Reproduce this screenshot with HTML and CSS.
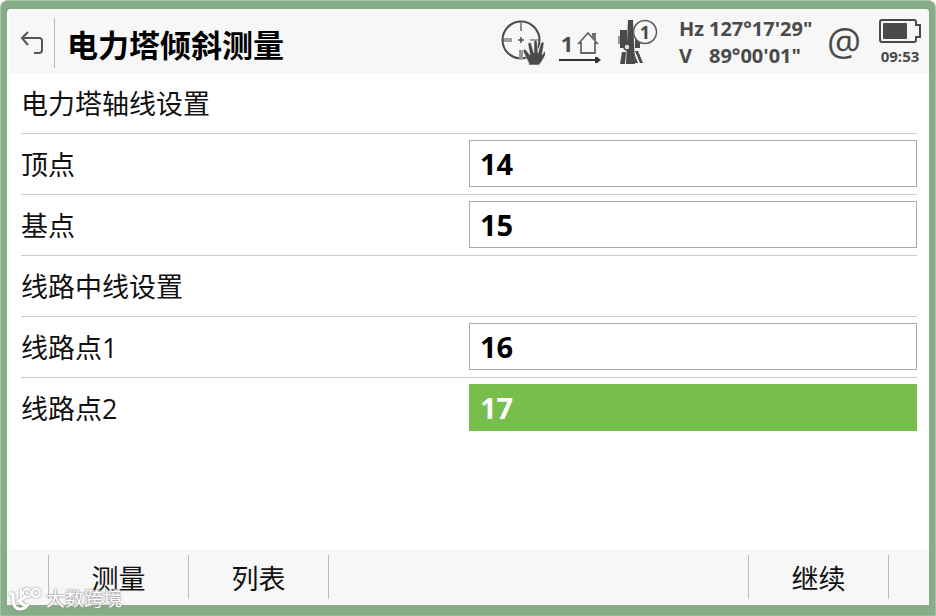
FILE: index.html
```html
<!DOCTYPE html>
<html lang="zh-CN">
<head>
    <meta charset="UTF-8">
    <meta name="viewport" content="width=device-width, initial-scale=1.0">
    <title>电力塔倾斜测量</title>
    <link rel="stylesheet" href="styles.css">
</head>
<body>
    <div class="device">
        <div class="screen">
            <!-- Status bar -->
            <header class="header">
                <button class="back" type="button" aria-label="返回">
                    <svg width="24" height="28" viewBox="0 0 24 28" fill="none" stroke="#555" stroke-width="2">
                        <path d="M8 3L2 9l6 7M2 9h17q3 0 3 3v9q0 3-3 3h-5"/>
                    </svg>
                </button>
                <h1>电力塔倾斜测量</h1>
                <div class="status">
                    <svg class="icon-target" width="44" height="48" viewBox="0 0 44 48" fill="none" stroke="#4a4a4a">
                        <circle cx="20" cy="21" r="18.5" stroke-width="2"/>
                        <path d="M20 4v8M2 20h9M2 22h9M29 21h9" stroke-width="1.2"/>
                        <path d="M18 31h4v9h-4z" fill="#999" stroke="none"/>
                        <path d="M20 18v6M17 21h6" stroke-width="1.5"/>
                        <path d="M28 46c0-4-3-6-4-10l-2-4q1-3 3-1l4 5-2-11q1-3 3-1l3 10v-12q2-2 3 0l1 12 3-10q2-2 3 0l-2 12 3-4q3-2 2 1l-5 9-3 4z" fill="#4a4a4a" stroke="#f7f7f7" stroke-width="0.5"/>
                    </svg>
                    <div class="home">
                        <div class="home-top">
                            <span>1</span>
                            <svg width="22" height="24" viewBox="0 0 22 24" fill="none" stroke="#666" stroke-width="1.8">
                                <path d="M4 22V12H2L11 2l9 10h-2v10zM16 7V3h2v6"/>
                            </svg>
                        </div>
                        <svg width="42" height="8" viewBox="0 0 42 8" fill="#333">
                            <path d="M0 3h36V1h2l4 3-4 3h-2V5H0z"/>
                        </svg>
                    </div>
                    <svg class="icon-station" width="44" height="48" viewBox="0 0 44 48">
                        <path d="M3 11h7v18H3zM18 17h5v12h-5zM5 33h4L8 45H3zM18 32h3l5 12h-3zM17 34l4 10h-3z" fill="#4a4a4a"/>
                        <path d="M1 17h2v8H1z" fill="#999"/>
                        <path d="M11 1h5l2 44h-9z" fill="#4a4a4a"/>
                        <circle cx="10" cy="28" r="3" fill="#ddd" stroke="#4a4a4a" stroke-width="1.5"/>
                        <circle cx="28" cy="13" r="11.5" fill="#f7f7f7" stroke="#5a5a5a" stroke-width="1.5"/>
                        <text x="28" y="20" text-anchor="middle" class="station-number">1</text>
                    </svg>
                    <div class="angles">
                        <span>Hz</span><span>127°17'29"</span>
                        <span>V</span><span>89°00'01"</span>
                    </div>
                    <span class="at">@</span>
                    <div class="battery">
                        <svg width="42" height="24" viewBox="0 0 42 24" fill="none" stroke="#4a4a4a" stroke-width="2">
                            <path d="M3 1h32q2 0 2 2v3h4v12h-4v3q0 2-2 2H3q-2 0-2-2V3q0-2 2-2z"/>
                            <rect x="4" y="4" width="24" height="16" rx="1" fill="#4a4a4a" stroke="none"/>
                        </svg>
                        <span>09:53</span>
                    </div>
                </div>
            </header>

            <!-- Settings form -->
            <main class="form">
                <h2 class="row">电力塔轴线设置</h2>
                <div class="row">
                    <label for="top-point">顶点</label>
                    <input id="top-point" type="text" value="14">
                </div>
                <div class="row">
                    <label for="base-point">基点</label>
                    <input id="base-point" type="text" value="15">
                </div>
                <h2 class="row">线路中线设置</h2>
                <div class="row">
                    <label for="line-point-1">线路点1</label>
                    <input id="line-point-1" type="text" value="16">
                </div>
                <div class="row">
                    <label for="line-point-2">线路点2</label>
                    <input id="line-point-2" class="active" type="text" value="17">
                </div>
            </main>

            <!-- Soft keys -->
            <footer class="softkeys">
                <span class="key"></span>
                <button class="key" type="button">测量</button>
                <button class="key" type="button">列表</button>
                <span class="key key-blank"></span>
                <button class="key" type="button">继续</button>
                <span class="key"></span>
            </footer>
        </div>

        <div class="watermark">
            <svg width="36" height="26" viewBox="0 0 36 26" fill="none" stroke="#fff" stroke-width="3">
                <path d="M2 8h4v7q1 8 7 8 6 0 8-5M19 10l-7 5 7 6"/>
                <path d="M14 3v9" stroke-width="2"/>
                <circle cx="20" cy="7" r="4" stroke-width="2"/>
                <circle cx="29" cy="7" r="4" stroke-width="2"/>
            </svg>
            <span>大数跨境</span>
        </div>
    </div>
</body>
</html>
```

FILE: styles.css
```css
* {
    box-sizing: border-box;
}
body {
    margin: 0;
    font-family: "Open Sans", "Noto Sans CJK SC", sans-serif;
    color: #111;
    background: #fff;
}
button {
    border: none;
    background: none;
    padding: 0;
    font: inherit;
    color: inherit;
    cursor: pointer;
}
.device {
    position: relative;
    display: flex;
    min-height: 100vh;
    padding: 8px 6px 10px;
    background: #87ad88;
    border: 1px solid #a5c5a6;
    border-bottom-color: #94bb94;
    border-top-left-radius: 8px;
    border-top-right-radius: 8px;
}
.screen {
    flex: 1;
    display: flex;
    flex-direction: column;
    background: #fff;
    border-radius: 4px 4px 0 0;
}
.header {
    display: flex;
    align-items: center;
    height: 64px;
    padding-top: 4px;
    margin-left: 2px;
    background: #f7f7f7;
    border-radius: 4px 4px 0 0;
}
.back {
    display: flex;
    align-items: center;
    justify-content: center;
    width: 46px;
    height: 50px;
    border-right: 1px solid #bbb;
}
h1 {
    margin: 0 0 0 12px;
    padding-top: 4px;
    font-size: 31px;
    line-height: 48px;
    font-weight: 700;
    color: #000;
    white-space: nowrap;
}
.status {
    display: flex;
    align-items: center;
    margin-left: auto;
    margin-right: 8px;
    color: #4a4a4a;
    font-weight: 700;
}
.icon-target {
    margin-right: 14px;
}
.home {
    display: flex;
    flex-direction: column;
    align-items: center;
    padding-top: 8px;
    margin-right: 16px;
}
.home-top {
    display: flex;
    align-items: center;
    gap: 4px;
    font-size: 22px;
    line-height: 26px;
}
.icon-station {
    margin-right: 18px;
}
.station-number {
    font-size: 18px;
    fill: #4a4a4a;
}
.angles {
    display: grid;
    grid-template-columns: 30px auto;
    width: 138px;
    padding-bottom: 2px;
    font-size: 20px;
    line-height: 27px;
    white-space: nowrap;
}
.at {
    margin-left: 10px;
    width: 34px;
    padding-bottom: 4px;
    font-size: 38px;
    line-height: 48px;
    font-weight: 400;
    text-align: center;
}
.battery {
    display: flex;
    flex-direction: column;
    align-items: center;
    margin-left: 18px;
    padding-top: 2px;
    font-size: 15px;
    line-height: 26px;
}
.form {
    flex: 1;
    padding: 0 12px 0 14px;
}
.row {
    display: grid;
    grid-template-columns: 1fr 1fr;
    align-items: center;
    height: 61px;
    margin: 0;
    padding-bottom: 2px;
    border-bottom: 1px solid #ccc;
    font-size: 27px;
    line-height: 40px;
    font-weight: 400;
}
h2.row,
.row label {
    padding-top: 4px;
}
.row:last-child {
    height: 60px;
    border-bottom: none;
}
.row input {
    width: 100%;
    height: 47px;
    padding: 0 10px;
    border: 1px solid #aaa;
    border-radius: 0;
    background: #fff;
    color: #000;
    font-family: inherit;
    font-size: 29px;
    font-weight: 700;
}
.row input.active {
    background: #78be4c;
    border-color: #78be4c;
    color: #fff;
}
.softkeys {
    display: grid;
    grid-template-columns: 21fr 70fr 70fr 210fr 70fr 20fr;
    height: 56px;
    padding: 6px 0;
    background: #f7f7f7;
}
.key {
    padding-top: 4px;
    border-right: 1px solid #bbb;
    font-size: 27px;
    line-height: 40px;
}
.key:last-child {
    border-right: none;
}
.watermark {
    position: absolute;
    left: 6px;
    bottom: 3px;
    display: flex;
    align-items: center;
    gap: 3px;
    color: #fff;
    font-size: 19px;
    line-height: 26px;
    text-shadow: 0 0 2px #888, 0 0 2px #888;
}
.watermark svg {
    filter: drop-shadow(0 0 1px #888);
}
```
